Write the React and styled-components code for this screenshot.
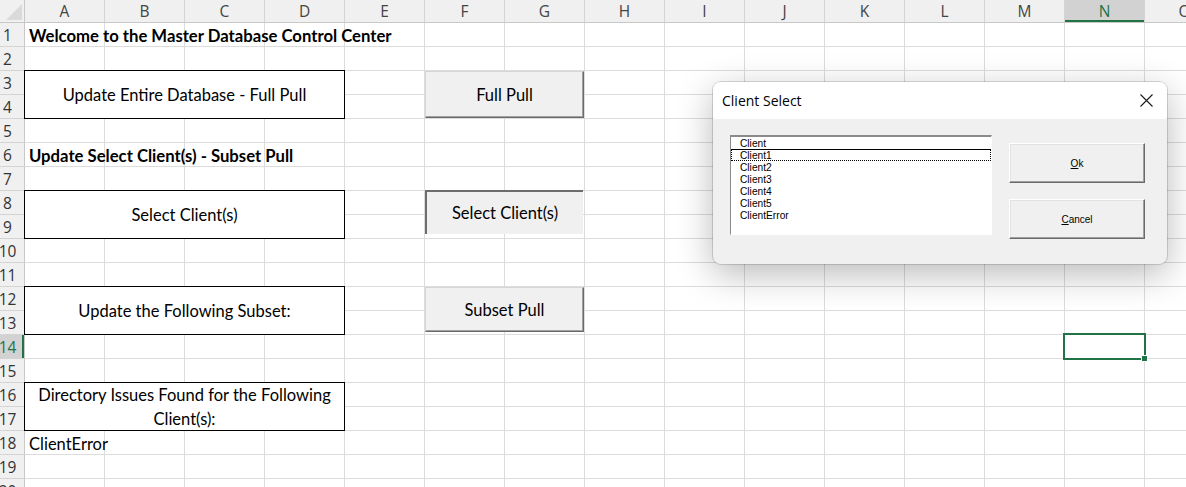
import React from 'react';
import styled, { createGlobalStyle, css } from 'styled-components';

const GlobalStyle = createGlobalStyle`
  html, body {
    margin: 0;
    padding: 0;
    background: #ffffff;
    overflow: hidden;
  }
`;

const COLUMNS = 'ABCDEFGHIJKLMNO'.split('');
const ROWS = Array.from({ length: 20 }, (_, i) => i + 1);
const ACTIVE_COL = 'N';
const ACTIVE_ROW = 14;
const GREEN = '#217346';

const sheetFont = `Lato, "Liberation Sans", sans-serif`;
const uiFont = `"Open Sans", "Noto Sans", sans-serif`;
const formFont = `"Liberation Sans", Arial, sans-serif`;

const Sheet = styled.div`
  position: relative;
  display: grid;
  width: 1186px;
  height: 487px;
  overflow: hidden;
`;

const Layer = styled.div`
  grid-area: 1 / 1;
  display: grid;
  grid-template-columns: 25px repeat(15, 80px);
  grid-template-rows: 23px repeat(20, 24px);
`;

const Corner = styled.div`
  background: #f0f0f0;
  border-right: 1px solid #c8c8c8;
  border-bottom: 1px solid #c8c8c8;
  display: flex;
  align-items: flex-end;
  justify-content: flex-end;
  padding: 0 2px 2px 0;
`;

const ColHead = styled.div`
  background: ${p => (p.$active ? '#d2d2d2' : '#f0f0f0')};
  border-right: 1px solid #d4d4d4;
  border-bottom: 1px solid #c8c8c8;
  color: ${p => (p.$active ? GREEN : '#444444')};
  font: 15.5px ${uiFont};
  display: flex;
  align-items: center;
  justify-content: center;
  ${p => p.$active && css`
    box-shadow: inset 0 -2px 0 ${GREEN};
  `}
`;

const RowHead = styled.div`
  background: ${p => (p.$active ? '#d2d2d2' : '#f0f0f0')};
  border-right: 1px solid #c8c8c8;
  border-bottom: 1px solid #d4d4d4;
  color: ${p => (p.$active ? GREEN : '#333333')};
  font: 15.5px ${uiFont};
  display: flex;
  align-items: center;
  justify-content: center;
  padding-right: 9px;
  white-space: nowrap;
  ${p => p.$active && css`
    box-shadow: inset -2px 0 0 ${GREEN};
  `}
`;

const Cell = styled.div`
  border-right: 1px solid #dcdcdc;
  border-bottom: 1px solid #dcdcdc;
`;

const Label = styled.div`
  grid-column: ${p => p.$col};
  grid-row: ${p => p.$row};
  display: flex;
  align-items: center;
  padding: 1px 0 0 4px;
  white-space: nowrap;
  font: ${p => (p.$bold ? 'bold 16.7px' : '16.5px')} ${sheetFont};
  color: #000000;
  z-index: 1;
`;

const MergedBox = styled.div`
  grid-column: 2 / 6;
  grid-row: ${p => p.$rows};
  margin: -1px 0 0 -1px;
  border: 1px solid #000000;
  background: #ffffff;
  display: flex;
  align-items: center;
  justify-content: center;
  text-align: center;
  padding: 0 6px;
  font: 16.5px ${sheetFont};
  line-height: 24px;
  color: #000000;
  z-index: 1;
`;

const SheetButton = styled.div`
  grid-column: 7 / 9;
  grid-row: ${p => p.$rows};
  margin: ${p => p.$margin};
  background: #f0f0f0;
  display: flex;
  align-items: center;
  justify-content: center;
  font: 16.5px ${sheetFont};
  color: #000000;
  z-index: 2;
  ${p => (p.$pressed
    ? css`
      border-top: 2px solid #6d6d6d;
      border-left: 2px solid #6d6d6d;
    `
    : css`
      border-top: 1px solid #d6d6d6;
      border-left: 1px solid #d6d6d6;
      border-right: 1px solid #6a6a6a;
      border-bottom: 1px solid #6a6a6a;
      box-shadow: inset -1px -1px 0 #a0a0a0;
    `)}
`;

const Selection = styled.div`
  grid-column: 15;
  grid-row: 15;
  margin: -2px -1px -1px -2px;
  border: 2px solid ${GREEN};
  position: relative;
  z-index: 2;
`;

const FillHandle = styled.span`
  position: absolute;
  right: -4px;
  bottom: -4px;
  width: 5px;
  height: 5px;
  background: ${GREEN};
  border: 1px solid #ffffff;
`;

/* ---------- the UserForm ---------- */

const Dialog = styled.div`
  position: absolute;
  left: 713px;
  top: 82px;
  width: 454px;
  height: 182px;
  box-sizing: border-box;
  border-radius: 8px;
  overflow: hidden;
  background: #f0f0f0;
  box-shadow: 0 10px 36px rgba(0, 0, 0, 0.28), 0 0 0 1px rgba(0, 0, 0, 0.14);
  z-index: 10;
  display: flex;
  flex-direction: column;
`;

const TitleBar = styled.div`
  height: 37px;
  flex: none;
  background: #ffffff;
  display: flex;
  align-items: center;
  justify-content: space-between;
  padding: 0 14px 0 9px;
  font: 14px ${uiFont};
  color: #000000;
`;

const CloseButton = styled.div`
  width: 14px;
  height: 14px;
  display: flex;
  align-items: center;
  justify-content: center;
`;

const FormBody = styled.div`
  flex: 1;
  display: flex;
  align-items: flex-start;
  padding: 16px 0 0 17px;
`;

const ListBox = styled.div`
  width: 262px;
  height: 100px;
  box-sizing: border-box;
  background: #ffffff;
  border-top: 2px solid #8a8a8a;
  border-left: 1px solid #8a8a8a;
  border-right: 1px solid #ffffff;
  border-bottom: 1px solid #ffffff;
  display: flex;
  flex-direction: column;
`;

const ListItem = styled.div`
  height: 12px;
  box-sizing: border-box;
  display: flex;
  align-items: center;
  padding: 1px 0 0 8px;
  font: 10.2px ${formFont};
  color: #000000;
  border: 1px solid transparent;
  ${p => p.$focus && css`
    border: 1px dotted #000000;
    border-top: 1px solid #000000;
  `}
`;

const ButtonColumn = styled.div`
  display: flex;
  flex-direction: column;
  gap: 16px;
  margin: 8px 0 0 17px;
`;

const FormButton = styled.div`
  width: 136px;
  height: 40px;
  box-sizing: border-box;
  background: #f0f0f0;
  border-top: 1px solid #ffffff;
  border-left: 1px solid #ffffff;
  border-right: 1px solid #6a6a6a;
  border-bottom: 1px solid #6a6a6a;
  box-shadow: inset -1px -1px 0 #a0a0a0, inset 1px 1px 0 #e3e3e3;
  display: flex;
  align-items: center;
  justify-content: center;
  font: 10px ${formFont};
  color: #000000;
`;

const CLIENTS = ['Client', 'Client1', 'Client2', 'Client3', 'Client4', 'Client5', 'ClientError'];

const ClientSelect = () => (
  <Dialog>
    <TitleBar>
      <span>Client Select</span>
      <CloseButton>
        <svg width="13" height="13" viewBox="0 0 13 13">
          <path d="M0.5 0.5 L12.5 12.5 M12.5 0.5 L0.5 12.5" stroke="#1a1a1a" strokeWidth="1.1" fill="none" />
        </svg>
      </CloseButton>
    </TitleBar>
    <FormBody>
      <ListBox>
        {CLIENTS.map(name => (
          <ListItem key={name} $focus={name === 'Client1'}>{name}</ListItem>
        ))}
      </ListBox>
      <ButtonColumn>
        <FormButton><u>O</u>k</FormButton>
        <FormButton><u>C</u>ancel</FormButton>
      </ButtonColumn>
    </FormBody>
  </Dialog>
);

const App = () => (
  <>
    <GlobalStyle />
    <Sheet>
      <Layer>
        <Corner>
          <svg width="16" height="16" viewBox="0 0 16 16">
            <polygon points="16,0 16,16 0,16" fill="#dadada" />
          </svg>
        </Corner>
        {COLUMNS.map(c => (
          <ColHead key={c} $active={c === ACTIVE_COL}>{c}</ColHead>
        ))}
        {ROWS.map(r => (
          <React.Fragment key={r}>
            <RowHead $active={r === ACTIVE_ROW}>{r}</RowHead>
            {COLUMNS.map(c => <Cell key={c} />)}
          </React.Fragment>
        ))}
      </Layer>

      <Layer>
        <Label $col={2} $row={2} $bold>Welcome to the Master Database Control Center</Label>
        <MergedBox $rows="4 / 6">Update Entire Database - Full Pull</MergedBox>
        <SheetButton $rows="4 / 6" $margin="0 1px 1px 0">Full Pull</SheetButton>

        <Label $col={2} $row={7} $bold>Update Select Client(s) - Subset Pull</Label>
        <MergedBox $rows="9 / 11">Select Client(s)</MergedBox>
        <SheetButton $rows="9 / 11" $margin="-1px 2px 5px 0" $pressed>Select Client(s)</SheetButton>

        <MergedBox $rows="13 / 15">Update the Following Subset:</MergedBox>
        <SheetButton $rows="13 / 15" $margin="0 1px 3px 0">Subset Pull</SheetButton>

        <Selection><FillHandle /></Selection>

        <MergedBox $rows="17 / 19">Directory Issues Found for the Following Client(s):</MergedBox>
        <Label $col={2} $row={19}>ClientError</Label>
      </Layer>

      <ClientSelect />
    </Sheet>
  </>
);

export default App;
